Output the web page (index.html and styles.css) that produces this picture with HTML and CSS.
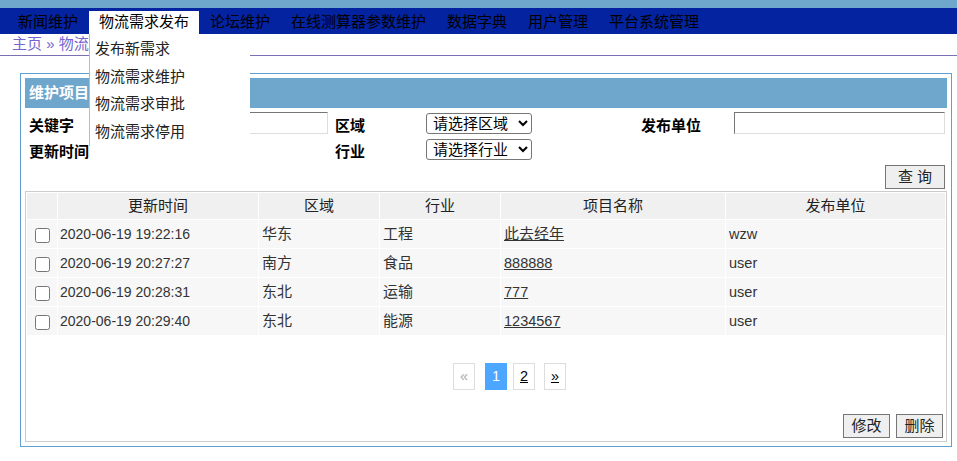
FILE: index.html
```html
<!DOCTYPE html>
<html lang="zh-CN">

<head>
    <meta charset="UTF-8">
    <title>物流需求维护</title>
    <link rel="stylesheet" href="styles.css">
</head>

<body>
    <!-- 顶部导航 -->
    <div class="top-band"></div>
    <div class="nav">
        <ul class="menu">
            <li><a href="#">新闻维护</a></li>
            <li class="active">
                <a href="#">物流需求发布</a>
                <ul class="submenu">
                    <li><a href="#">发布新需求</a></li>
                    <li><a href="#">物流需求维护</a></li>
                    <li><a href="#">物流需求审批</a></li>
                    <li><a href="#">物流需求停用</a></li>
                </ul>
            </li>
            <li><a href="#">论坛维护</a></li>
            <li><a href="#">在线测算器参数维护</a></li>
            <li><a href="#">数据字典</a></li>
            <li><a href="#">用户管理</a></li>
            <li><a href="#">平台系统管理</a></li>
        </ul>
    </div>

    <!-- 面包屑 -->
    <div class="crumb">
        <a href="#">主页</a> » <a href="#">物流需求维护</a>
    </div>

    <div class="panel">
        <div class="panel-title">维护项目查询</div>

        <!-- 查询条件 -->
        <form action="#" method="get" class="search-form">
            <label>关键字</label>
            <input type="text" name="keyword" class="txt">
            <label>区域</label>
            <select name="area">
                <option value="">请选择区域</option>
                <option>华东</option>
                <option>南方</option>
                <option>东北</option>
            </select>
            <label>发布单位</label>
            <input type="text" name="unit" class="txt txt-unit">

            <label>更新时间</label>
            <span></span>
            <label>行业</label>
            <select name="trade">
                <option value="">请选择行业</option>
                <option>工程</option>
                <option>食品</option>
                <option>运输</option>
                <option>能源</option>
            </select>
            <span></span>
            <span></span>
        </form>
        <div class="btn-row">
            <button type="button" class="btn btn-query">查 询</button>
        </div>

        <!-- 数据列表 -->
        <div class="list-box">
            <table class="table">
                <thead>
                    <tr>
                        <th class="col-cb"></th>
                        <th class="col-time">更新时间</th>
                        <th class="col-area">区域</th>
                        <th class="col-trade">行业</th>
                        <th class="col-name">项目名称</th>
                        <th>发布单位</th>
                    </tr>
                </thead>
                <tbody>
                    <tr>
                        <td class="cb"><input type="checkbox"></td>
                        <td class="time">2020-06-19 19:22:16</td>
                        <td>华东</td>
                        <td>工程</td>
                        <td><a href="#">此去经年</a></td>
                        <td class="en">wzw</td>
                    </tr>
                    <tr>
                        <td class="cb"><input type="checkbox"></td>
                        <td class="time">2020-06-19 20:27:27</td>
                        <td>南方</td>
                        <td>食品</td>
                        <td class="en"><a href="#">888888</a></td>
                        <td class="en">user</td>
                    </tr>
                    <tr>
                        <td class="cb"><input type="checkbox"></td>
                        <td class="time">2020-06-19 20:28:31</td>
                        <td>东北</td>
                        <td>运输</td>
                        <td class="en"><a href="#">777</a></td>
                        <td class="en">user</td>
                    </tr>
                    <tr>
                        <td class="cb"><input type="checkbox"></td>
                        <td class="time">2020-06-19 20:29:40</td>
                        <td>东北</td>
                        <td>能源</td>
                        <td class="en"><a href="#">1234567</a></td>
                        <td class="en">user</td>
                    </tr>
                </tbody>
            </table>

            <!-- 分页 -->
            <div class="pager">
                <span class="page disabled">«</span>
                <span class="page current">1</span>
                <a href="#" class="page">2</a>
                <a href="#" class="page">»</a>
            </div>

            <div class="btn-row bottom">
                <button type="button" class="btn btn-op">修改</button>
                <button type="button" class="btn btn-op">删除</button>
            </div>
        </div>
    </div>
</body>

</html>
```

FILE: styles.css
```css
body {
    margin: 0;
    font-family: "Liberation Sans", "Noto Sans CJK SC", sans-serif;
    font-size: 15px;
    color: #333;
}

/* 顶部导航 */
.top-band {
    height: 8px;
    background-color: #6fa6cc;
}

.nav {
    height: 26px;
    background-color: #0323a1;
}

.menu {
    display: flex;
    margin: 0;
    padding: 3px 0 0 8px;
    list-style: none;
}

.menu > li {
    position: relative;
    margin-right: 1px;
}

.menu > li > a {
    display: block;
    padding: 0 10px;
    height: 23px;
    line-height: 22px;
    color: #000;
    text-decoration: none;
}

.menu > li.active > a {
    background-color: #fff;
}

/* 下拉菜单 */
.submenu {
    position: absolute;
    left: 0;
    top: 23px;
    z-index: 10;
    width: 160px;
    margin: 0;
    padding: 0 0 2px 0;
    list-style: none;
    background-color: #fff;
    border-left: 1px solid #bbb;
}

.submenu li a {
    display: block;
    padding-left: 5px;
    height: 27.5px;
    line-height: 29px;
    color: #222;
    text-decoration: none;
}

/* 面包屑 */
.crumb {
    height: 21px;
    line-height: 20px;
    padding-left: 12px;
    color: #7564cf;
    border-bottom: 1px solid #7b6fb5;
}

.crumb a {
    color: #7564cf;
    text-decoration: none;
}

/* 面板 */
.panel {
    margin: 17px 5px 0 20px;
    padding: 4px;
    border: 1px solid #5fa0d2;
}

.panel-title {
    height: 30px;
    line-height: 30px;
    padding-left: 4px;
    background-color: #6fa6cc;
    color: #fff;
    font-weight: bold;
}

/* 查询表单 */
.search-form {
    display: grid;
    grid-template-columns: 121px 185px 91px 215px 93px 1fr;
    grid-auto-rows: 26px;
    align-items: center;
    padding-top: 2px;
}

.search-form label {
    padding-left: 4px;
    padding-top: 2px;
    font-weight: bold;
    color: #000;
}

.txt {
    box-sizing: border-box;
    width: 182px;
    height: 22px;
    border: 1px solid;
    border-color: #767676 #ddd #ddd #767676;
    padding: 0 3px;
}

.txt-unit {
    width: 211px;
    margin-left: 4px;
}

.search-form select {
    width: 106px;
    height: 21px;
    margin-left: 4px;
    padding: 0 2px;
    border: 1px solid #767676;
    border-radius: 3px;
    font-family: inherit;
    font-size: 15px;
    color: #000;
    background-color: #fff;
}

/* 按钮 */
.btn-row {
    display: flex;
    justify-content: flex-end;
    gap: 6px;
    margin-top: 3px;
    padding-right: 2px;
}

.btn {
    height: 24px;
    padding: 0 6px;
    border: 1px solid #767676;
    border-radius: 0;
    background-color: #efefef;
    font-family: inherit;
    font-size: 15px;
    line-height: 20px;
    color: #222;
}

.btn-query {
    width: 60px;
}

.btn-op {
    width: 47px;
}

.btn-row.bottom {
    margin-top: 24px;
    padding-right: 3px;
}

/* 列表区域 */
.list-box {
    margin-top: 2px;
    padding-bottom: 3px;
    border: 1px solid #ccc;
}

.table {
    width: 100%;
    border-collapse: separate;
    border-spacing: 1px;
    table-layout: fixed;
}

.table th {
    height: 26px;
    padding: 0;
    background-color: #f0f0f0;
    font-weight: normal;
    line-height: 20px;
    color: #222;
}

.table td {
    height: 28px;
    padding: 0 0 0 3px;
    background-color: #f7f7f7;
    line-height: 20px;
    overflow: hidden;
    white-space: nowrap;
}

.col-cb { width: 30px; }
.col-time { width: 200px; }
.col-area { width: 120px; }
.col-trade { width: 120px; }
.col-name { width: 224px; }

.table td.cb {
    padding: 0;
    text-align: center;
}

.table td.cb input {
    margin: 0;
    width: 15px;
    height: 15px;
    vertical-align: middle;
}

.table td.time {
    padding-left: 2px;
    font-size: 14px;
}

.table td.en {
    font-size: 14.5px;
}

.table a {
    color: #333;
}

/* 分页 */
.pager {
    display: flex;
    margin: 27px 0 0 427px;
}

.page {
    box-sizing: border-box;
    width: 22px;
    height: 27px;
    line-height: 25px;
    text-align: center;
    border: 1px solid #ddd;
    font-size: 14.5px;
    color: #000;
    text-decoration: underline;
}

.page.disabled {
    margin-right: 10px;
    color: #aaa;
    text-decoration: none;
}

.page.current {
    margin-right: 6px;
    background-color: #4da6ff;
    border-color: #4da6ff;
    color: #fff;
    text-decoration: none;
}

.page + a.page {
    margin-right: 9px;
}
```
